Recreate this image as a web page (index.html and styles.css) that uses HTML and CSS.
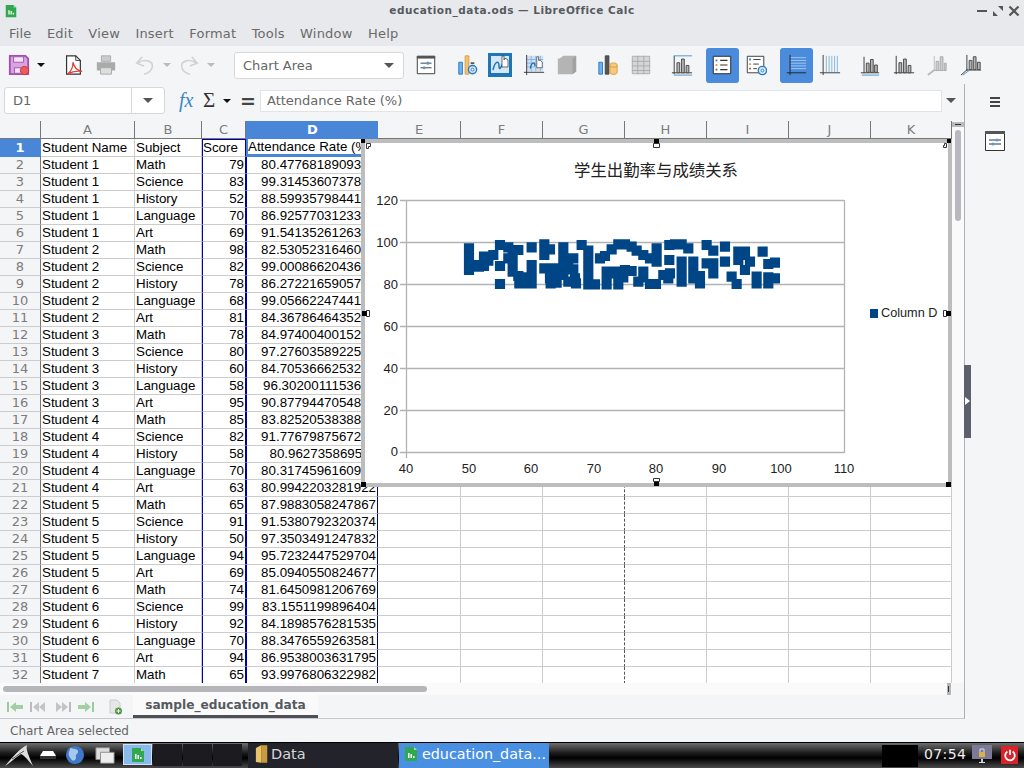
FILE: index.html
```html
<!DOCTYPE html>
<html>
<head>
<meta charset="utf-8">
<title>education_data.ods — LibreOffice Calc</title>
<link rel="stylesheet" href="styles.css">
</head>
<body>

<svg class="defs" width="0" height="0">
  <symbol id="bars" viewBox="0 0 24 24">
    <path d="M3.5 2v20M1 20.5h22" stroke="#333" fill="none"/>
    <path d="M6.5 9.5h3v11h-3zM11.5 5.5h3v15h-3zM16.5 12.5h3v8h-3z" fill="#b5b5b5" stroke="#444"/>
  </symbol>
  <symbol id="calc" viewBox="0 0 16 16">
    <path d="M2 1h9l3 3v11H2z" fill="#2fa84f"/>
    <path d="M11 1l3 3h-3z" fill="#a5dcb4"/>
    <path d="M5 7h1.5v5H5zM7.5 8H9v4H7.5zM10 10h1.5v2H10z" fill="#fff"/>
  </symbol>
</svg>

<div class="titlebar">
  <svg class="app-ico" viewBox="0 0 16 16"><use href="#calc"/></svg>
  <span class="title-text">education_data.ods — LibreOffice Calc</span>
  <div class="win-btns">
    <svg viewBox="0 0 12 12"><path d="M1 6h10" stroke="#555" stroke-width="2"/></svg>
    <svg viewBox="0 0 12 12"><path d="M6 1h5v5zM1 6l5 5H1z" fill="#555"/></svg>
    <svg viewBox="0 0 12 12"><path d="M1.500 1.500l9 9M10.500 1.500l-9 9" stroke="#555" stroke-width="2.200"/></svg>
  </div>
</div>

<div class="menubar">
  <span>File</span><span>Edit</span><span>View</span><span>Insert</span><span>Format</span><span>Tools</span><span>Window</span><span>Help</span>
</div>

<div class="toolbar">
  <div class="tb-left">
    <svg class="ico save" viewBox="0 0 24 24"><path d="M2 2h17l3 3v17H2z" fill="#d9a3de" stroke="#a24fb3" stroke-width="2"/><path d="M6 3h11v6H6z" fill="#f3e3f5" stroke="#a24fb3"/><path d="M7 15h8v6H7z" fill="#f3e3f5" stroke="#a24fb3"/><circle cx="18" cy="18" r="4.5" fill="#ee5b5b" stroke="#c33"/></svg>
    <i class="arrow black save-arrow"></i>
    <svg class="ico pdf" viewBox="0 0 24 24"><path d="M5 2h10l5 5v15H5z" fill="#fff" stroke="#333" stroke-width="1.3"/><path d="M15 2v5h5" fill="none" stroke="#333"/><path d="M6 22c4-3 6-8 6-13 1 5 4 9 10 10-5-1-11 0-16 3z" fill="none" stroke="#e0403a" stroke-width="1.4"/></svg>
    <svg class="ico print" viewBox="0 0 24 24"><path d="M7 2h10v6H7z" fill="#ccc" stroke="#aaa"/><path d="M2 9h20v9H2z" fill="#aaa"/><path d="M6 15h12v7H6z" fill="#ddd" stroke="#aaa"/></svg>
    <svg class="ico undo" viewBox="0 0 24 24"><path d="M9 3L3 10l8 3M4 10c7-5 17-3 16 4-1 5-5 7-9 8" fill="none" stroke="#d2d2d2" stroke-width="1.700"/></svg>
    <i class="arrow light undo-arrow"></i>
    <svg class="ico redo" viewBox="0 0 24 24"><path d="M15 3l6 7-8 3M20 10C13 5 3 7 4 14c1 5 5 7 9 8" fill="none" stroke="#d2d2d2" stroke-width="1.700"/></svg>
    <i class="arrow light redo-arrow"></i>
  </div>
  <div class="combo">Chart Area<i class="arrow dark"></i></div>
  <div class="tb-icons">
    <span class="tb"><svg class="ico" viewBox="0 0 24 24"><path d="M2.500 2.500h19v19h-19z" fill="#fff" stroke="#333"/><path d="M2 2h20v3H2z" fill="#555"/><path d="M6 10h12M6 15h12" stroke="#333"/><circle cx="14" cy="10" r="1.700" fill="#5b9bd5"/><circle cx="10" cy="15" r="1.700" fill="#5b9bd5"/></svg></span>
    <span class="tb gap"><svg class="ico" viewBox="0 0 24 24"><path d="M3 9h4v13H3z" fill="#6db3ee" stroke="#2a78c2"/><path d="M10 2h4v20h-4z" fill="#f6c177" stroke="#d89a3c"/><path d="M16 9h4v2h-4z" fill="#555"/><circle cx="18" cy="17" r="4.500" fill="#cfe4f7" stroke="#2a78c2" stroke-width="1.500"/><circle cx="18" cy="17" r="1.500" fill="#fff" stroke="#2a78c2"/></svg></span>
    <span class="tb"><svg class="ico wide" viewBox="0 0 24 24"><path d="M0 0h24v24H0z" fill="#1d76b8"/><path d="M3 3h18v17H3z" fill="#d5e6f5"/><path d="M5 17c2-9 6-10 6-4s3 0 5-6" fill="none" stroke="#1d76b8" stroke-width="1.500"/><path d="M14 8V3h2v4l1-2 1 1 1 0 1 1v7h-6z" fill="#fff" stroke="#333" stroke-width=".7"/></svg></span>
    <span class="tb"><svg class="ico" viewBox="0 0 24 24"><path d="M4 2h18v17H4z" fill="#cfe0f2"/><path d="M4 6h18M4 10h18M4 14h18M9 2v17M14 2v17M19 2v17" stroke="#6ba3d8" stroke-width=".7"/><path d="M4 1v22M1 20h22" stroke="#333"/><path d="M8 16c1-7 5-8 5-3" fill="none" stroke="#1d76b8" stroke-width="1.500"/><path d="M15 9V3h2v4l1 0 1 0 2 2v6h-6z" fill="#fff" stroke="#333" stroke-width=".7"/></svg></span>
    <span class="tb"><svg class="ico" viewBox="0 0 24 24"><path d="M4 5l4-3h14v17l-4 3H2V5z" fill="#b4b4b4"/><path d="M18 5v17l4-3V2z" fill="#a2a2a2"/></svg></span>
    <span class="tb gap"><svg class="ico" viewBox="0 0 24 24"><path d="M2 9h4v13H2z" fill="#6db3ee" stroke="#2a78c2"/><path d="M9 2h4v20H9z" fill="#555" stroke="#444"/><path d="M14 12c0-3 8-3 8 0v8c0 3-8 3-8 0z" fill="#f8c97c" stroke="#d89a3c"/><path d="M14 13c1 2 7 2 8 0" fill="none" stroke="#d89a3c"/></svg></span>
    <span class="tb"><svg class="ico" viewBox="0 0 24 24"><path d="M2.500 2.500h19v19h-19z" fill="#d6d6d6" stroke="#aaa"/><path d="M2 8h20M2 13h20M2 18h20M8.500 2v20M15 2v20" stroke="#aaa"/></svg></span>
    <span class="tb gap"><svg class="ico" viewBox="0 0 24 24"><use href="#bars"/><path d="M3 2h20M3 23h20" stroke="#4a90c8"/></svg></span>
    <span class="tb gap on"><svg class="ico" viewBox="0 0 24 24"><path d="M2.500 2.500h19v19h-19z" fill="#fff" stroke="#222"/><path d="M10 7h8M10 12h8M10 17h8" stroke="#333" stroke-width="1.300"/><path d="M5 6h2v2H5z" fill="#3b82d0"/><path d="M5 11h2v2H5z" fill="#e0953c"/><path d="M5 16h2v2H5z" fill="#a0623a"/></svg></span>
    <span class="tb"><svg class="ico" viewBox="0 0 24 24"><path d="M2.500 2.500h18v18h-18z" fill="#fff" stroke="#333"/><path d="M9 6h8M9 11h6M9 16h4" stroke="#333"/><path d="M4.500 5h2v2h-2z" fill="#3b82d0"/><path d="M4.500 10h2v2h-2z" fill="#e0953c"/><path d="M4.500 15h2v2h-2z" fill="#a0623a"/><circle cx="19" cy="18" r="4.500" fill="#d8eaf9" stroke="#2a78c2" stroke-width="1.500"/><circle cx="19" cy="18" r="1.500" fill="#fff" stroke="#2a78c2"/></svg></span>
    <span class="tb gap on"><svg class="ico" viewBox="0 0 24 24"><path d="M6 4h17M6 7h17M6 10h17M6 13h17M6 16h17" stroke="#a9cdf0"/><path d="M5.500 1v22M2 20.500h21" stroke="#222"/></svg></span>
    <span class="tb"><svg class="ico" viewBox="0 0 24 24"><path d="M8 2v18M11 2v18M14 2v18M17 2v18M20 2v18" stroke="#7eb2dd"/><path d="M4.500 1v22M1 20.500h22" stroke="#333"/></svg></span>
    <span class="tb gap"><svg class="ico" viewBox="0 0 24 24"><path d="M5.500 3v18M2 20.500h20" stroke="#333" fill="none"/><path d="M8 10h3v10H8zM12.500 6h3v14h-3zM17 12h3v8h-3z" fill="#b5b5b5" stroke="#444"/><path d="M3 23h19" stroke="#4a90c8"/></svg></span>
    <span class="tb"><svg class="ico" viewBox="0 0 24 24"><use href="#bars"/></svg></span>
    <span class="tb"><svg class="ico" viewBox="0 0 24 24"><path d="M9 2v16M7 18h15" stroke="#bbb" fill="none"/><path d="M11 8h3v10h-3zM15.500 3h3v15h-3zM20 10h2v8h-2z" fill="#ccc" stroke="#aaa"/><path d="M2 23l8-6" stroke="#bbb" stroke-width="2"/></svg></span>
    <span class="tb"><svg class="ico" viewBox="0 0 24 24"><path d="M7.500 1v17M7 17.500h16" stroke="#333" fill="none"/><path d="M10 7h3v10h-3zM14.500 3h3v14h-3zM19 9h3v8h-3z" fill="#b5b5b5" stroke="#444"/><path d="M1 23l7-6" stroke="#333"/><path d="M3 23l7-5" stroke="#4a90c8"/></svg></span>
  </div>
</div>

<div class="workarea">
  <div class="sheet">
    <div class="formula">
      <div class="namebox"><span class="name">D1</span><span class="name-drop"><i class="arrow dark"></i></span></div>
      <span class="fx">fx</span>
      <span class="sigma">Σ</span><i class="arrow black"></i>
      <span class="equals">=</span>
      <div class="input">Attendance Rate (%)</div>
      <i class="arrow dark input-arrow"></i>
    </div>

    <div class="gridrow">
      <table class="cells">
        <colgroup>
          <col class="c-row"><col class="c-a"><col class="c-b"><col class="c-c"><col class="c-d"><col class="c-e">
          <col class="c-n"><col class="c-n"><col class="c-n"><col class="c-n"><col class="c-n"><col class="c-k">
        </colgroup>
        <tr class="cols"><th></th><th>A</th><th>B</th><th>C</th><th class="sel">D</th><th>E</th><th>F</th><th>G</th><th>H</th><th>I</th><th>J</th><th>K</th></tr>
        <tr class="head"><th class="sel">1</th><td>Student Name</td><td>Subject</td><td>Score</td><td class="cursor">Attendance Rate (%)</td><td></td><td></td><td></td><td></td><td></td><td></td><td></td></tr>
        <tr><th>2</th><td>Student 1</td><td>Math</td><td>79</td><td>80.4776818909312</td><td></td><td></td><td></td><td></td><td></td><td></td><td></td></tr>
        <tr><th>3</th><td>Student 1</td><td>Science</td><td>83</td><td>99.3145360737841</td><td></td><td></td><td></td><td></td><td></td><td></td><td></td></tr>
        <tr><th>4</th><td>Student 1</td><td>History</td><td>52</td><td>88.5993579844127</td><td></td><td></td><td></td><td></td><td></td><td></td><td></td></tr>
        <tr><th>5</th><td>Student 1</td><td>Language</td><td>70</td><td>86.9257703123365</td><td></td><td></td><td></td><td></td><td></td><td></td><td></td></tr>
        <tr><th>6</th><td>Student 1</td><td>Art</td><td>69</td><td>91.5413526126304</td><td></td><td></td><td></td><td></td><td></td><td></td><td></td></tr>
        <tr><th>7</th><td>Student 2</td><td>Math</td><td>98</td><td>82.5305231646081</td><td></td><td></td><td></td><td></td><td></td><td></td><td></td></tr>
        <tr><th>8</th><td>Student 2</td><td>Science</td><td>82</td><td>99.0008662043652</td><td></td><td></td><td></td><td></td><td></td><td></td><td></td></tr>
        <tr><th>9</th><td>Student 2</td><td>History</td><td>78</td><td>86.2722165905743</td><td></td><td></td><td></td><td></td><td></td><td></td><td></td></tr>
        <tr><th>10</th><td>Student 2</td><td>Language</td><td>68</td><td>99.0566224744129</td><td></td><td></td><td></td><td></td><td></td><td></td><td></td></tr>
        <tr><th>11</th><td>Student 2</td><td>Art</td><td>81</td><td>84.3678646435287</td><td></td><td></td><td></td><td></td><td></td><td></td><td></td></tr>
        <tr><th>12</th><td>Student 3</td><td>Math</td><td>78</td><td>84.9740040015216</td><td></td><td></td><td></td><td></td><td></td><td></td><td></td></tr>
        <tr><th>13</th><td>Student 3</td><td>Science</td><td>80</td><td>97.2760358922574</td><td></td><td></td><td></td><td></td><td></td><td></td><td></td></tr>
        <tr><th>14</th><td>Student 3</td><td>History</td><td>60</td><td>84.7053666253218</td><td></td><td></td><td></td><td></td><td></td><td></td><td></td></tr>
        <tr><th>15</th><td>Student 3</td><td>Language</td><td>58</td><td>96.3020011153642</td><td></td><td></td><td></td><td></td><td></td><td></td><td></td></tr>
        <tr><th>16</th><td>Student 3</td><td>Art</td><td>95</td><td>90.8779447054817</td><td></td><td></td><td></td><td></td><td></td><td></td><td></td></tr>
        <tr><th>17</th><td>Student 4</td><td>Math</td><td>85</td><td>83.8252053838846</td><td></td><td></td><td></td><td></td><td></td><td></td><td></td></tr>
        <tr><th>18</th><td>Student 4</td><td>Science</td><td>82</td><td>91.7767987567235</td><td></td><td></td><td></td><td></td><td></td><td></td><td></td></tr>
        <tr><th>19</th><td>Student 4</td><td>History</td><td>58</td><td>80.962735869511</td><td></td><td></td><td></td><td></td><td></td><td></td><td></td></tr>
        <tr><th>20</th><td>Student 4</td><td>Language</td><td>70</td><td>80.3174596160947</td><td></td><td></td><td></td><td></td><td></td><td></td><td></td></tr>
        <tr><th>21</th><td>Student 4</td><td>Art</td><td>63</td><td>80.9942203281922</td><td></td><td></td><td></td><td></td><td></td><td></td><td></td></tr>
        <tr><th>22</th><td>Student 5</td><td>Math</td><td>65</td><td>87.9883058247867</td><td></td><td></td><td></td><td></td><td></td><td></td><td></td></tr>
        <tr><th>23</th><td>Student 5</td><td>Science</td><td>91</td><td>91.5380792320374</td><td></td><td></td><td></td><td></td><td></td><td></td><td></td></tr>
        <tr><th>24</th><td>Student 5</td><td>History</td><td>50</td><td>97.3503491247832</td><td></td><td></td><td></td><td></td><td></td><td></td><td></td></tr>
        <tr><th>25</th><td>Student 5</td><td>Language</td><td>94</td><td>95.7232447529704</td><td></td><td></td><td></td><td></td><td></td><td></td><td></td></tr>
        <tr><th>26</th><td>Student 5</td><td>Art</td><td>69</td><td>85.0940550824677</td><td></td><td></td><td></td><td></td><td></td><td></td><td></td></tr>
        <tr><th>27</th><td>Student 6</td><td>Math</td><td>74</td><td>81.6450981206769</td><td></td><td></td><td></td><td></td><td></td><td></td><td></td></tr>
        <tr><th>28</th><td>Student 6</td><td>Science</td><td>99</td><td>83.1551199896404</td><td></td><td></td><td></td><td></td><td></td><td></td><td></td></tr>
        <tr><th>29</th><td>Student 6</td><td>History</td><td>92</td><td>84.1898576281535</td><td></td><td></td><td></td><td></td><td></td><td></td><td></td></tr>
        <tr><th>30</th><td>Student 6</td><td>Language</td><td>70</td><td>88.3476559263581</td><td></td><td></td><td></td><td></td><td></td><td></td><td></td></tr>
        <tr><th>31</th><td>Student 6</td><td>Art</td><td>94</td><td>86.9538003631795</td><td></td><td></td><td></td><td></td><td></td><td></td><td></td></tr>
        <tr><th>32</th><td>Student 7</td><td>Math</td><td>65</td><td>93.9976806322982</td><td></td><td></td><td></td><td></td><td></td><td></td><td></td></tr>
      </table>

      <!-- chart object floats over the cells, coordinates are the screen ones -->
      <svg class="chart" viewBox="361 139 591 348" width="591" height="348">
        <rect x="361" y="139" width="591" height="348" fill="#fff"/>
        <path d="M363 141h587v344H363z" fill="none" stroke="#bdbdbd" stroke-width="4"/>
        <text class="ch-title" x="656" y="176" text-anchor="middle">学生出勤率与成绩关系</text>
        <path d="M400 200.500h444M400 242.500h444M400 284.500h444M400 326.500h444M400 368.500h444M400 410.500h444M400 452.500h444M406.500 200v258M844.500 200v253" fill="none" stroke="#b3b3b3" stroke-width="1.300"/>
        <g class="ch-label" text-anchor="end">
          <text x="398" y="205">120</text><text x="398" y="247">100</text><text x="398" y="289">80</text><text x="398" y="331">60</text><text x="398" y="373">40</text><text x="398" y="415">20</text><text x="398" y="456">0</text>
        </g>
        <g class="ch-label" text-anchor="middle">
          <text x="406" y="473">40</text><text x="469" y="473">50</text><text x="531" y="473">60</text><text x="594" y="473">70</text><text x="656" y="473">80</text><text x="719" y="473">90</text><text x="781" y="473">100</text><text x="844" y="473">110</text>
        </g>
        <path transform="translate(360 190) scale(.3333)" fill="none" stroke="#004586" stroke-width="30.500" stroke-linecap="square" d="M327 175h.01M327 195h.01M327 215h.01M327 240h.01M345 225h.01M357 230h.01M372 228h.01M372 200h.01M385 212h.01M400 195h.01M420 165h.01M420 228h.01M420 282h.01M445 172h.01M445 205h.01M458 195h.01M458 220h.01M458 245h.01M475 180h.01M475 258h.01M478 280h.01M492 262h.01M492 280h.01M515 172h.01M515 225h.01M515 245h.01M515 265h.01M515 280h.01M553 163h.01M553 180h.01M553 195h.01M553 235h.01M570 178h.01M575 235h.01M570 265h.01M572 280h.01M595 235h.01M590 255h.01M590 278h.01M610 172h.01M610 195h.01M610 225h.01M610 255h.01M625 222h.01M625 275h.01M640 205h.01M640 238h.01M645 265h.01M648 280h.01M665 165h.01M685 182h.01M685 205h.01M685 225h.01M685 245h.01M685 265h.01M685 283h.01M705 283h.01M720 205h.01M735 198h.01M740 245h.01M740 265h.01M740 283h.01M755 178h.01M755 250h.01M770 245h.01M775 163h.01M775 265h.01M775 283h.01M795 163h.01M795 240h.01M790 262h.01M815 170h.01M815 243h.01M830 182h.01M835 275h.01M850 195h.01M850 245h.01M850 262h.01M870 205h.01M870 282h.01M888 282h.01M890 175h.01M890 195h.01M890 215h.01M910 255h.01M925 265h.01M928 165h.01M928 210h.01M945 163h.01M930 250h.01M965 163h.01M965 215h.01M965 245h.01M965 275h.01M985 175h.01M1000 215h.01M1000 240h.01M1000 265h.01M1020 258h.01M1020 280h.01M1040 165h.01M1040 220h.01M1060 182h.01M1060 220h.01M1060 250h.01M1095 170h.01M1095 215h.01M1115 260h.01M1130 282h.01M1135 185h.01M1135 210h.01M1150 195h.01M1155 185h.01M1155 240h.01M1170 215h.01M1190 260h.01M1190 280h.01M1208 185h.01M1225 222h.01M1225 262h.01M1225 280h.01M1245 218h.01M1245 265h.01"/>
        <rect x="870" y="309" width="8" height="9" fill="#004586"/>
        <text class="ch-legend" x="881" y="317">Column D</text>
        <path d="M366.500 143.500h4v3h-2v2h-2zM653.500 143.500h6v4h-6zM946.500 143.500v4h-3v-2h1v-2zM366.500 310.500h3v6h-3zM943.500 310.500h3v6h-3zM653.500 478.500h6v3h-6z" fill="#fff" stroke="#333"/>
        <path d="M361 139h4v4h-4zM654 139h5v4h-5zM947 139h4v4h-4zM362 311h5v5h-5zM946 311h5v5h-5zM361 482h5v5h-5zM654 482h5v4h-5zM946 482h5v5h-5z" fill="#000"/>
      </svg>

      <div class="vscroll"><span class="split"></span><span class="thumb"></span></div>
    </div>

    <div class="hscroll"><span class="hthumb"></span><span class="hsplit"></span></div>

    <div class="tabs">
      <svg class="nav" viewBox="0 0 18 12"><path d="M1 1v10" stroke="#9c9" stroke-width="2"/><path d="M3 6l6-5v3h7v4H9v3z" fill="#a4cfa4"/></svg>
      <svg class="nav" viewBox="0 0 18 12"><path d="M1 1v10" stroke="#bbb" stroke-width="2"/><path d="M3 6l6-5v10zM9 6l6-5v10z" fill="#c4c4c4"/></svg>
      <svg class="nav" viewBox="0 0 18 12"><path d="M17 1v10" stroke="#bbb" stroke-width="2"/><path d="M15 6L9 1v10zM9 6L3 1v10z" fill="#c4c4c4"/></svg>
      <svg class="nav" viewBox="0 0 18 12"><path d="M17 1v10" stroke="#9c9" stroke-width="2"/><path d="M15 6L9 1v3H2v4h7v3z" fill="#a4cfa4"/></svg>
      <svg class="add-sheet" viewBox="0 0 16 16"><path d="M3 1h7l3 3v10H3z" fill="#e6e6e6" stroke="#ccc"/><circle cx="11.500" cy="12" r="3.500" fill="#4c9a3f"/><path d="M11.500 10v4M9.500 12h4" stroke="#fff"/></svg>
      <span class="tab">sample_education_data</span>
    </div>
  </div>

  <div class="deck">
    <div class="deck-btn">
      <svg width="12" height="12" viewBox="0 0 12 12"><path d="M1 2h10M1 6h10M1 10h10" stroke="#444" stroke-width="2"/></svg>
    </div>
    <div class="deck-btn">
      <svg width="20" height="20" viewBox="0 0 20 20"><path d="M.5.5h19v19H.5z" fill="#fff" stroke="#333"/><path d="M0 0h20v3H0z" fill="#555"/><path d="M4 9h12M4 13h12" stroke="#333"/><circle cx="12" cy="9" r="1.500" fill="#5b9bd5"/><circle cx="8" cy="13" r="1.500" fill="#5b9bd5"/></svg>
    </div>
    <div class="deck-handle"><i></i></div>
  </div>
</div>

<div class="statusbar"><span class="status-text">Chart Area selected</span></div>

<div class="taskbar">
  <svg class="start" viewBox="0 0 30 24"><path d="M1 22C8 14 14 6 23 1c-1 4 0 7 6 21-5-6-9-11-12-12-5 3-11 9-16 12z" fill="#ddd"/><path d="M8 15c4-2 8-6 12-8" stroke="#555" fill="none"/></svg>
  <svg class="launch" viewBox="0 0 20 20"><path d="M2 8h16v6H2z" fill="#333"/><path d="M5 6h10l3 5H2z" fill="#fff"/></svg>
  <svg class="launch" viewBox="0 0 22 22"><circle cx="11" cy="11" r="10" fill="#3f78c9"/><path d="M6 3c3 2 6 0 8 3s-3 4-2 7-3 6-5 3-3-4-3-7z" fill="#a9c8ee"/></svg>
  <svg class="launch" viewBox="0 0 22 22"><path d="M1 3h15v13H1z" fill="#ddd" stroke="#888"/><path d="M6 8h15v12H6z" fill="#eee" stroke="#888"/></svg>
  <span class="launch-on"><svg viewBox="0 0 16 16"><use href="#calc"/></svg></span>
  <span class="slot"></span><span class="slot"></span><span class="slot"></span>
  <span class="task">
    <svg viewBox="0 0 16 22"><path d="M1 4l6-3v20l-6-1z" fill="#e8c46a"/><path d="M7 1h7v20H7z" fill="#c99a3e"/></svg>Data
  </span>
  <span class="task active"><svg viewBox="0 0 16 16"><use href="#calc"/></svg>education_data...</span>
  <span class="black-box"></span>
  <span class="clock">07:54</span>
  <svg class="tray" viewBox="0 0 20 20"><path d="M0 0h20v14H0z" fill="#7d7a99"/><path d="M7 17h6v1H7z" fill="#ddd"/><path d="M9 14h2v3H9z" fill="#ccc"/><path d="M7 7h6v5H7z" fill="#d8b24a"/><path d="M8 7V4h4v3" fill="none" stroke="#ddd"/></svg>
  <span class="power"><svg viewBox="0 0 16 16"><path d="M5 4a5.500 5.500 0 1 0 6 0M8 2v6" fill="none" stroke="#fff" stroke-width="2"/></svg></span>
</div>

</body>
</html>
```

FILE: styles.css
```css
html, body {margin: 0; padding: 0;}
body {width: 1024px; height: 768px; overflow: hidden; display: flex; flex-direction: column; background: #f4f5f7; font-family: "DejaVu Sans", sans-serif; font-size: 13px; color: #666;}
.defs {position: absolute;}

.arrow {display: inline-block; width: 0; height: 0; border-left: 5px solid transparent; border-right: 5px solid transparent; border-top: 5px solid #555;}
.arrow.dark {border-top-color: #555;}
.arrow.black {border-left-width: 4px; border-right-width: 4px; border-top: 4px solid #111;}
.arrow.light {border-left-width: 4px; border-right-width: 4px; border-top: 4px solid #bbb;}

.titlebar {height: 22px; background: #e8e9ec; display: flex; align-items: center; position: relative; flex: none;}
.app-ico {width: 14px; height: 16px; margin-left: 4px;}
.title-text {position: absolute; left: 0; right: 0; top: 3px; text-align: center; font-size: 10.5px; line-height: 14px; font-weight: bold; letter-spacing: .5px; color: #555a60;}
.win-btns {position: absolute; right: 4px; top: 5px; display: flex; gap: 4px;}
.win-btns svg {width: 12px; height: 12px;}

.menubar {height: 24px; box-sizing: border-box; padding: 0 0 2px 9px; background: #e8e9ec; display: flex; align-items: center; gap: 15.4px; flex: none;}
.menubar span {color: #6a6a6a; letter-spacing: .2px;}

.toolbar {height: 38px; display: flex; align-items: center; flex: none;}
.tb-left {width: 234px; height: 38px; position: relative; flex: none;}
.ico {width: 22px; height: 22px; display: block;}
.tb-left .ico {position: absolute; top: 8px;}
.tb-left .arrow {position: absolute; top: 17px;}
.save {left: 8px;}
.save-arrow {left: 37px;}
.pdf {left: 62px;}
.print {left: 95px;}
.undo {left: 134px;}
.undo-arrow {left: 163px;}
.redo {left: 178px;}
.redo-arrow {left: 207px;}
.combo {width: 170px; height: 27px; box-sizing: border-box; background: #fff; border: 1px solid #d8d8d8; border-radius: 3px; padding: 0 8px; display: flex; align-items: center; justify-content: space-between; font-size: 13px; flex: none;}
.combo .arrow {margin-right: 1px;}
.tb-icons {display: flex; margin-left: 5.5px; height: 35px; align-items: center;}
.tb {width: 33.5px; height: 35px; display: flex; align-items: center; justify-content: center; border-radius: 3px; flex: none;}
.tb.gap {margin-left: 7px;}
.tb.on {background: #4a8bdc;}
.ico.wide {width: 24px; height: 24px;}

.workarea {height: 635px; display: flex; flex: none;}
.sheet {width: 964px; flex: none; border-right: 1px solid #aeb0b4;}
.deck {flex: 1; position: relative; padding-top: 7px;}
.deck-btn {height: 40px; display: flex; align-items: center; justify-content: center;}
.deck-btn:first-child {height: 22px; margin-bottom: 8px;}
.deck-handle {position: absolute; left: -1px; top: 281px; width: 7px; height: 73px; background: #5d5f6b;}
.deck-handle i {position: absolute; left: 1px; top: 32px; border-left: 5px solid #fff; border-top: 4px solid transparent; border-bottom: 4px solid transparent;}

.formula {height: 37px; padding-bottom: 4px; box-sizing: border-box; display: flex; align-items: center; position: relative;}
.namebox {margin-left: 4px; width: 161px; height: 27px; box-sizing: border-box; background: #fff; border: 1px solid #d8d8d8; border-radius: 3px; display: flex; flex: none;}
.name {flex: 1; padding-left: 8px; line-height: 25px;}
.name-drop {width: 32px; border-left: 1px solid #d8d8d8; display: flex; align-items: center; justify-content: center;}
.fx {margin-left: 14px; font-family: "Liberation Serif", serif; font-style: italic; font-size: 20px; color: #3d86c6; width: 24px;}
.sigma {font-family: "Liberation Serif", serif; font-size: 21px; color: #333; width: 15px;}
.formula .arrow.black {margin-left: 5px;}
.equals {font-size: 19px; font-weight: bold; color: #444; margin-left: 9px; width: 20px;}
.input {width: 682px; height: 22px; box-sizing: border-box; background: #fff; border: 1px solid #e2e3e6; padding-left: 6px; line-height: 20px; flex: none;}
.input-arrow {margin-left: 4px;}

.gridrow {display: flex; height: 562px; position: relative; overflow: hidden;}
.cells {border-collapse: separate; border-spacing: 0; table-layout: fixed; width: 952px; background: #fff; font-family: "Liberation Sans", sans-serif; font-size: 13.33px; color: #000; flex: none; align-self: flex-start;}
.c-row {width: 41px;}
.c-a {width: 94px;}
.c-b {width: 67px;}
.c-c {width: 44px;}
.c-d {width: 132px;}
.c-e {width: 83px;}
.c-n {width: 82px;}
.c-k {width: 81px;}
.cells td, .cells th {height: 17px; box-sizing: border-box; padding: 0; border-right: 1px solid #ccc; border-bottom: 1px solid #ccc; overflow: hidden; white-space: nowrap; line-height: 16px;}
.cells td {padding-left: 1px;}
.cells th {background: #f4f5f7; font-family: "DejaVu Sans", sans-serif; font-weight: normal; font-size: 13px; color: #7c7c7c; border-right-color: #777;}
.cols th {height: 18px; border-bottom: 1px solid #777; line-height: 17px;}
.cols th.sel {padding-left: 2px;}
.cells th.sel {background: #4a86d8; color: #fff; font-weight: bold; border-color: #4a86d8;}
.cells tr:not(.head):not(.cols) td:nth-child(4), .cells tr:not(.head):not(.cols) td:nth-child(5) {text-align: right; padding: 0 1px 0 0;}
.cells td:nth-child(4) {border-left: 1px solid #0000a8; border-right: 1px solid #0000a8;}
.cells td:nth-child(5) {border-left: 1px solid #0000a8; border-right: 1px solid #0000a8;}
.cells td:nth-child(8) {border-right: 1px dashed #555;}
.head td:nth-child(4) {border-top: 1px solid #0000a8; padding-left: 0;}
.head td.cursor {border: 2px solid #4a86d8; border-width: 0 0 3px 2px; line-height: 15px; padding: 0;}

.chart {position: absolute; left: 361px; top: 18px; display: block;}
.ch-title {font-family: "Noto Sans CJK SC", sans-serif; font-size: 16.4px; fill: #222;}
.ch-label text {font-family: "Liberation Sans", sans-serif; font-size: 13px; fill: #222;}
.ch-legend {font-family: "Liberation Sans", sans-serif; font-size: 12.7px; fill: #222;}

.vscroll {width: 12px; background: #fafafb; position: relative; flex: 1;}
.split {display: block; height: 5px; margin-top: 1px; background: #bbb; position: relative;}
.split::after {content: ""; position: absolute; left: 3px; top: 2px; width: 6px; height: 1px; background: #333;}
.thumb {display: block; width: 6px; height: 91px; margin: 3px 0 0 3px; background: #b8b8be; border-radius: 3px;}

.hscroll {height: 12px; background: #fafafb; display: flex; align-items: center; position: relative; width: 952px;}
.hthumb {display: block; width: 424px; height: 6px; margin-left: 3px; background: #b5b5ba; border-radius: 3px;}
.hsplit {display: block; width: 4px; height: 12px; margin-left: auto; margin-right: 1px; background: #b5b5b5; border-left: 1px solid #b5b5b5; box-sizing: border-box; position: relative;}
.hsplit::after {content: ""; position: absolute; left: 0; top: 3px; width: 1px; height: 6px; background: #333;}

.tabs {height: 24px; box-sizing: border-box; display: flex; align-items: center; border-bottom: 1px solid #c8c9cc;}
.nav {width: 18px; height: 12px; margin-left: 5px;}
.nav:first-child {margin-left: 7px;}
.add-sheet {width: 16px; height: 18px; margin-left: 13px;}
.tab {margin-left: 10px; width: 185px; height: 23px; box-sizing: border-box; background: #fafafb; border-bottom: 3px solid #4e5058; text-align: center; font-size: 12.2px; font-weight: bold; line-height: 21px; color: #555a60;}

.statusbar {height: 23px; display: flex; align-items: center; flex: none; position: relative;}
.status-text {margin-left: 10px; font-size: 12px;}

.taskbar {height: 26px; box-sizing: border-box; border-top: 1px solid #000; display: flex; align-items: center; flex: none; background: linear-gradient(#6e6e6e, #1c1c1c 40%, #000 60%, #4a4a4a); color: #e6e6e6;}
.start {width: 30px; height: 24px; margin-left: 4px;}
.launch {width: 20px; height: 20px; margin: 0 0 2px 7px;}
.launch:nth-of-type(2) {margin-left: 4px;}
.launch:nth-of-type(4) {margin-left: 10px;}
.launch-on {width: 29px; height: 21px; margin: 0 0 2px 8px; background: #8ab9ec; border: 1px solid #cfe2f7; box-sizing: border-box; display: flex; align-items: center; justify-content: center; flex: none;}
.launch-on svg {width: 16px; height: 18px;}
.slot {width: 29px; height: 22px; margin: 0 0 2px 1px; background: #1c1c20; flex: none;}
.task {width: 150px; height: 25px; display: flex; align-items: center; background: #23242b; font-size: 14.5px; flex: none; margin-left: 6px; color: #d6d6d6; box-sizing: border-box; padding: 0 0 3px 7px; gap: 2px;}
.task svg {width: 14px; height: 20px;}
.task.active {margin-left: 1px; background: #4a90e2; color: #fff; padding-left: 4px; gap: 3px; font-size: 14.3px;}
.task.active svg {width: 16px; height: 18px;}
.black-box {width: 36px; height: 22px; background: #000; margin-left: auto;}
.clock {margin-left: 6px; width: 46px; padding-bottom: 3px; font-size: 14px; color: #eee; letter-spacing: .4px;}
.tray {width: 20px; height: 20px; margin: 0 0 2px 2px;}
.power {width: 17px; height: 18px; margin: 0 6px 2px 9px; background: #d8232a; display: flex; align-items: center; justify-content: center;}
.power svg {width: 14px; height: 14px;}
```
